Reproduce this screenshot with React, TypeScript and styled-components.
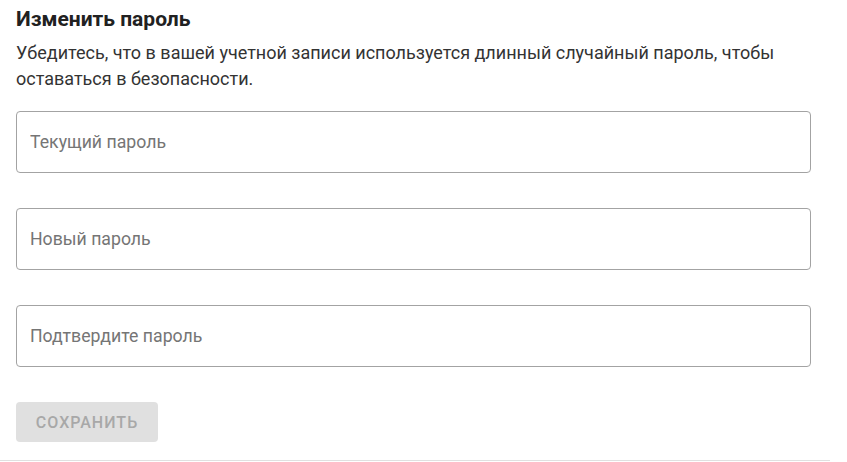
import React from "react";
import styled, { createGlobalStyle } from "styled-components";

const GlobalStyle = createGlobalStyle`
  html, body {
    margin: 0;
    padding: 0;
    background: #ffffff;
  }
  body {
    font-family: Roboto, "Liberation Sans", Arial, sans-serif;
    -webkit-font-smoothing: antialiased;
  }
`;

const Section = styled.section`
  width: 830px;
  box-sizing: border-box;
  padding: 6px 0 18px 16px;
  border-bottom: 1px solid #e0e0e0;
`;

const Title = styled.h2`
  margin: 0;
  font-size: 21px;
  line-height: 26px;
  font-weight: 700;
  color: #212121;
`;

const Description = styled.p`
  margin: 8px 0 0;
  width: 790px;
  font-size: 18px;
  line-height: 26px;
  font-weight: 400;
  color: #333333;
`;

const Form = styled.form`
  margin-top: 19px;
  display: flex;
  flex-direction: column;
  align-items: flex-start;
  gap: 35px;
`;

const Field = styled.input`
  width: 795px;
  height: 62px;
  box-sizing: border-box;
  padding: 0 13px;
  border: 1px solid #a3a3a3;
  border-radius: 4px;
  font-family: Roboto, "Liberation Sans", Arial, sans-serif;
  font-size: 17.7px;
  color: #212121;
  background: #ffffff;
  outline: none;

  &::placeholder {
    color: #757575;
    opacity: 1;
  }
`;

const SaveButton = styled.button`
  width: 142px;
  height: 40px;
  padding: 0;
  border: none;
  border-radius: 4px;
  background: #e0e0e0;
  color: #a8a8a8;
  font-family: Roboto, "Liberation Sans", Arial, sans-serif;
  font-size: 16px;
  font-weight: 500;
  letter-spacing: 1px;
  text-transform: uppercase;
  cursor: default;
`;

export default function App() {
  return (
    <>
      <GlobalStyle />
      <Section>
        <Title>Изменить пароль</Title>
        <Description>
          Убедитесь, что в вашей учетной записи используется длинный случайный
          пароль, чтобы оставаться в безопасности.
        </Description>
        <Form onSubmit={(e) => e.preventDefault()}>
          <Field type="password" placeholder="Текущий пароль" />
          <Field type="password" placeholder="Новый пароль" />
          <Field type="password" placeholder="Подтвердите пароль" />
          <SaveButton type="submit" disabled>
            Сохранить
          </SaveButton>
        </Form>
      </Section>
    </>
  );
}
